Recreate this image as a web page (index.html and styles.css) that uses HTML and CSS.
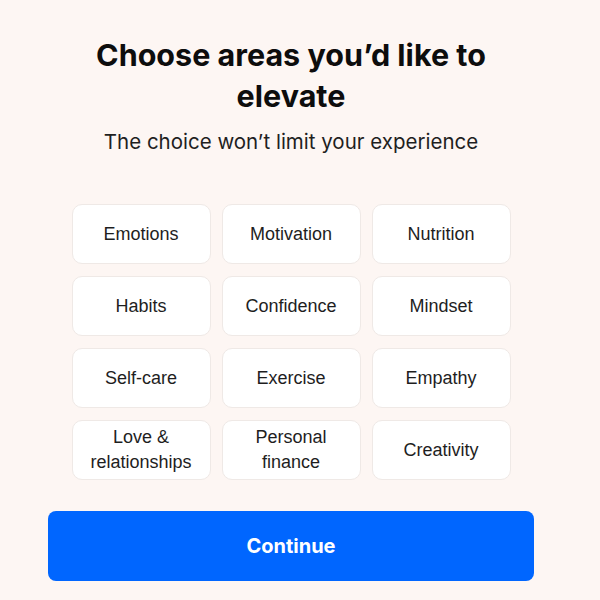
FILE: index.html
```html
<!DOCTYPE html>
<html>
<head>
<meta charset="utf-8">
<link rel="stylesheet" href="styles.css">
</head>
<body>
<div class="page">
  <h1 class="title">Choose areas you’d like to elevate</h1>
  <p class="subtitle">The choice won’t limit your experience</p>
  <div class="grid">
    <div class="card">Emotions</div>
    <div class="card">Motivation</div>
    <div class="card">Nutrition</div>
    <div class="card">Habits</div>
    <div class="card">Confidence</div>
    <div class="card">Mindset</div>
    <div class="card">Self-care</div>
    <div class="card">Exercise</div>
    <div class="card">Empathy</div>
    <div class="card">Love &amp;<br>relationships</div>
    <div class="card">Personal<br>finance</div>
    <div class="card">Creativity</div>
  </div>
  <button class="continue">Continue</button>
</div>
</body>
</html>
```
FILE: styles.css
```css
html, body {
  margin: 0;
  padding: 0;
  background: #fdf6f3;
}
.page {
  width: 486px;
  margin-left: 48px;
  padding-top: 34px;
  display: flex;
  flex-direction: column;
  align-items: center;
}
.title {
  font-family: Inter, "Liberation Sans", sans-serif;
  font-weight: 700;
  font-size: 30.5px;
  line-height: 41px;
  color: #0d0d0d;
  text-align: center;
  width: 420px;
  margin: 0;
}
.subtitle {
  font-family: Inter, "Liberation Sans", sans-serif;
  font-size: 20.5px;
  line-height: 24px;
  color: #1f1f1f;
  margin: 14px 0 0 0;
  text-align: center;
}
.grid {
  margin-top: 50px;
  display: grid;
  grid-template-columns: repeat(3, 139px);
  grid-auto-rows: 60px;
  column-gap: 11px;
  row-gap: 12px;
}
.card {
  box-sizing: border-box;
  background: #ffffff;
  border: 1px solid #efe9e6;
  border-radius: 10px;
  display: flex;
  align-items: center;
  justify-content: center;
  text-align: center;
  font-family: "Liberation Sans", Arial, sans-serif;
  font-size: 18px;
  line-height: 25px;
  color: #1e1e1e;
}
.continue {
  margin-top: 31px;
  width: 486px;
  height: 70px;
  border: none;
  border-radius: 8px;
  background: #0066ff;
  color: #ffffff;
  font-family: Inter, "Liberation Sans", sans-serif;
  font-weight: 700;
  font-size: 20px;
}
```
